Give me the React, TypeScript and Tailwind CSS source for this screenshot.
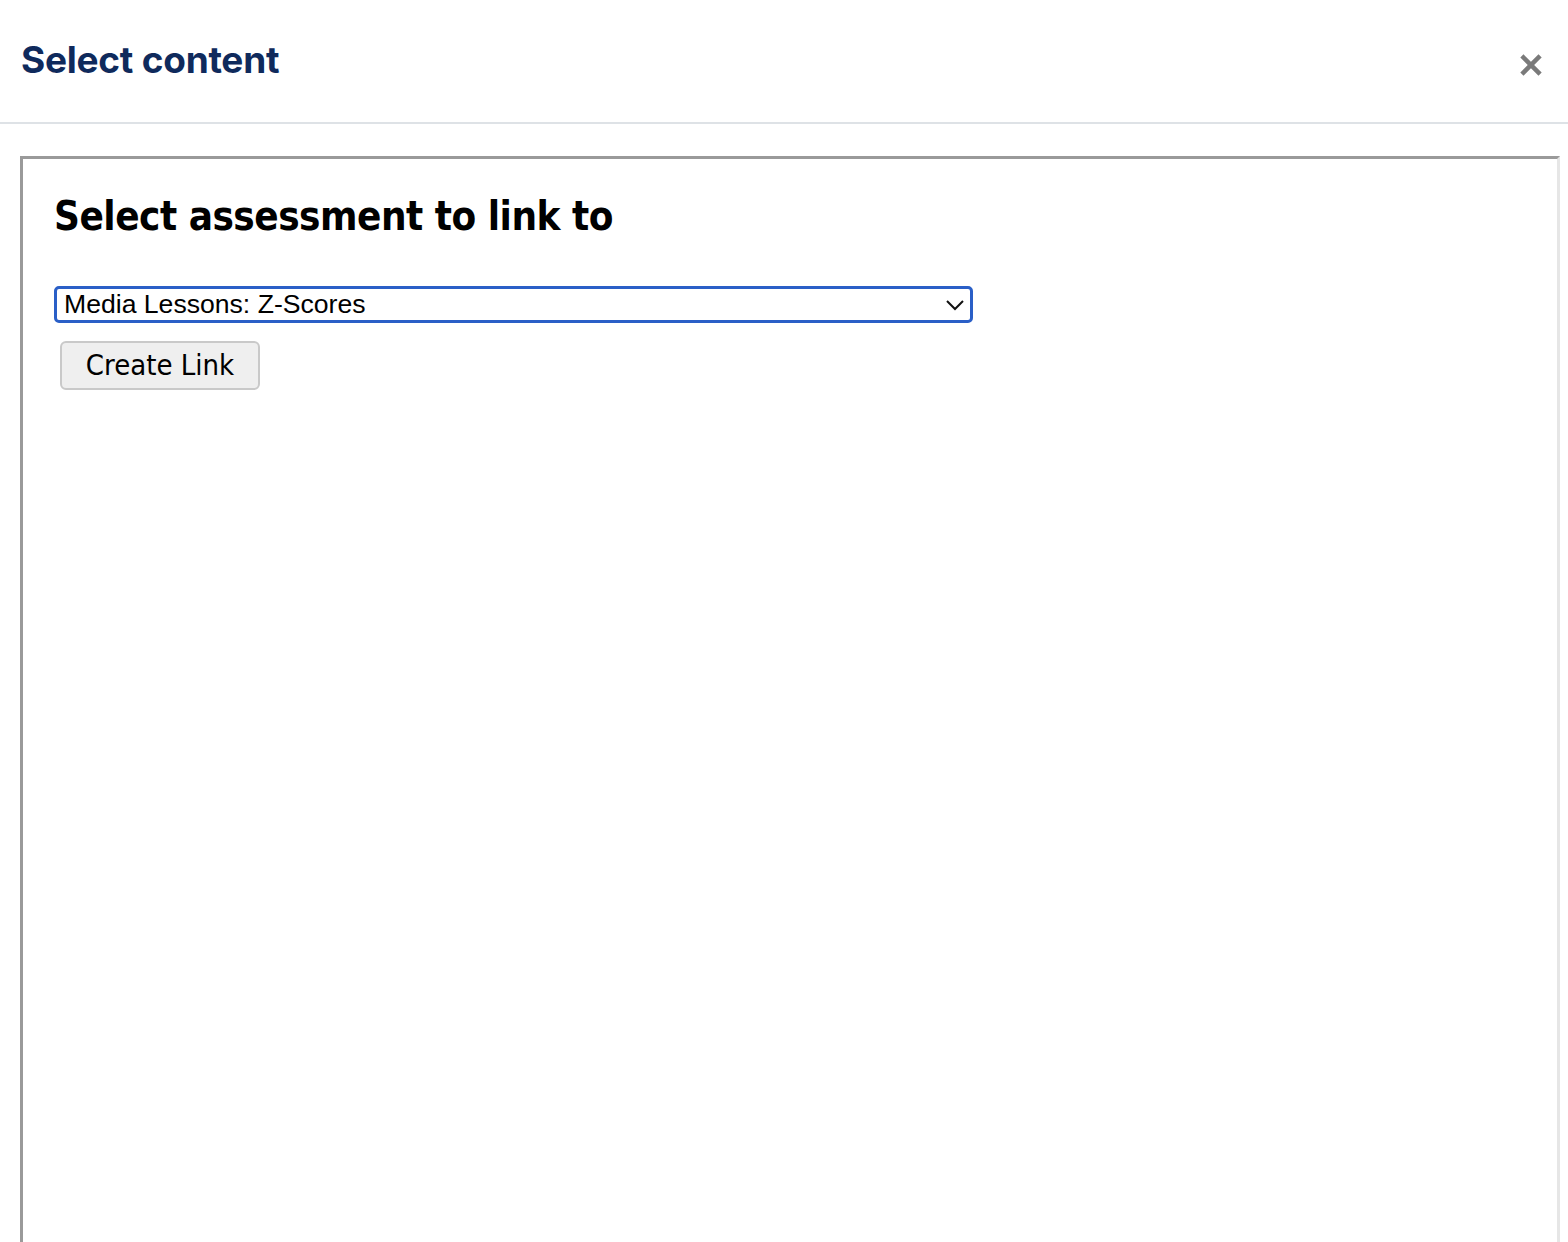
import { X } from "lucide-react";

export default function App() {
  return (
    <div className="flex h-[1242px] w-[1568px] flex-col overflow-hidden bg-white font-['Inter',sans-serif]">
      {/* Modal header */}
      <header className="flex h-[124px] shrink-0 items-center justify-between border-b-2 border-[#dee2e6] pl-[21px] pr-[22px]">
        <h1 className="-mt-[2px] text-[37px] font-bold tracking-[-0.25px] text-[#0f2a5c]">Select content</h1>
        <X className="mt-[7px] text-[#7a7a7a]" width={30} height={30} strokeWidth={3.6} strokeLinecap="square" />
      </header>

      {/* Embedded frame */}
      <div className="flex-1 pl-[20px] pr-[8px] pt-[32px]">
        <div className="h-full border-l-[3px] border-t-[3px] border-r-[3px] border-[#9a9a9a] border-r-[#e6e6e6] pl-[31px] pr-6 pt-[26px]">
          <h2 className="text-[40px] font-bold leading-[62px] tracking-[-0.5px] text-black font-['DejaVu_Sans_Condensed','DejaVu_Sans',sans-serif]">
            Select assessment to link to
          </h2>
          <div className="mt-[39px] flex h-[37px] w-[919px] items-center justify-between rounded-[5px] border-[3px] border-[#2a5fc7] pl-[7px] pr-[4px]">
            <span className="font-['Liberation_Sans',Arial,sans-serif] text-[26.6px] leading-none text-black">Media Lessons: Z-Scores</span>
            <svg width="20" height="12" viewBox="0 0 20 12" className="mr-[1px]">
              <path d="M2 2 L10 10 L18 2" fill="none" stroke="#111" strokeWidth="2" />
            </svg>
          </div>
          <button className="ml-[6px] mt-[18px] flex h-[49px] w-[200px] items-center justify-center rounded-[6px] border-2 border-[#c9c9c9] bg-[#efefef] font-['DejaVu_Sans_Condensed','DejaVu_Sans',sans-serif] text-[29px] text-black">
            Create Link
          </button>
        </div>
      </div>
    </div>
  );
}
